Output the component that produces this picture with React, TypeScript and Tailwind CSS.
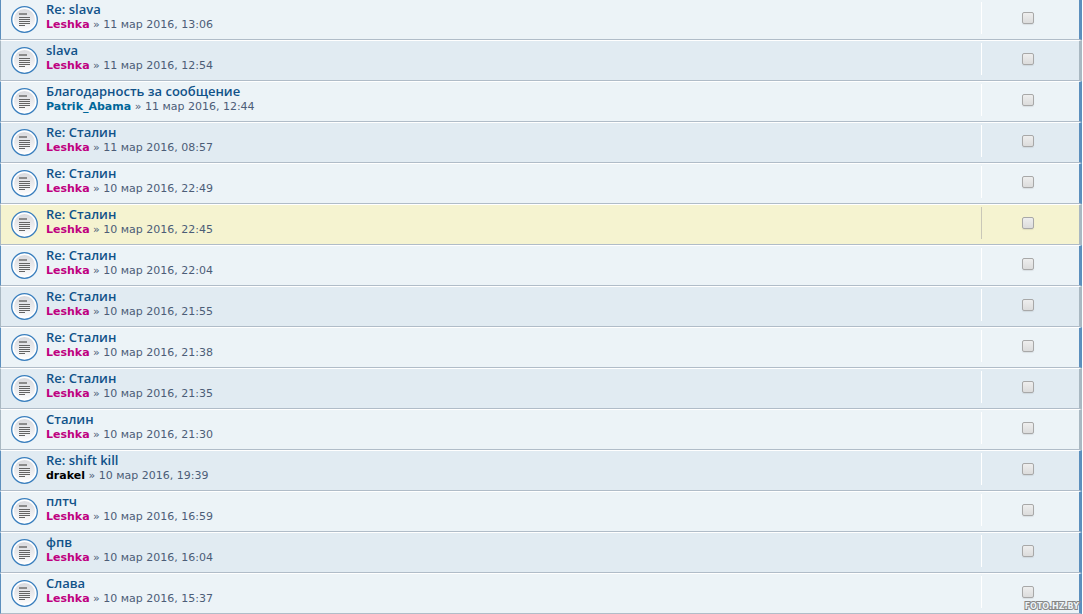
import clsx from "clsx";

type Message = {
  subject: string;
  author: string;
  date: string;
  color?: string;
  replied?: boolean;
  marked?: boolean;
};

const messages: Message[] = [
  { subject: "Re: slava", author: "Leshka", date: "11 мар 2016, 13:06", replied: true },
  { subject: "slava", author: "Leshka", date: "11 мар 2016, 12:54" },
  { subject: "Благодарность за сообщение", author: "Patrik_Abama", date: "11 мар 2016, 12:44", color: "text-[#006699]", replied: true },
  { subject: "Re: Сталин", author: "Leshka", date: "11 мар 2016, 08:57", replied: true },
  { subject: "Re: Сталин", author: "Leshka", date: "10 мар 2016, 22:49", replied: true },
  { subject: "Re: Сталин", author: "Leshka", date: "10 мар 2016, 22:45", marked: true },
  { subject: "Re: Сталин", author: "Leshka", date: "10 мар 2016, 22:04", replied: true },
  { subject: "Re: Сталин", author: "Leshka", date: "10 мар 2016, 21:55" },
  { subject: "Re: Сталин", author: "Leshka", date: "10 мар 2016, 21:38", replied: true },
  { subject: "Re: Сталин", author: "Leshka", date: "10 мар 2016, 21:35" },
  { subject: "Сталин", author: "Leshka", date: "10 мар 2016, 21:30" },
  { subject: "Re: shift kill", author: "drakel", date: "10 мар 2016, 19:39", color: "text-black", replied: true },
  { subject: "плтч", author: "Leshka", date: "10 мар 2016, 16:59", replied: true },
  { subject: "фпв", author: "Leshka", date: "10 мар 2016, 16:04", replied: true },
  { subject: "Слава", author: "Leshka", date: "10 мар 2016, 15:37", replied: true },
];

const TopicIcon = () => (
  <svg className="w-[27px] h-[27px] shrink-0" viewBox="0 0 27 27" aria-hidden="true">
    <defs>
      <linearGradient id="disc" x1="0" y1="0" x2="0" y2="1">
        <stop offset="0" stopColor="#d9dade" />
        <stop offset="1" stopColor="#fbfbfc" />
      </linearGradient>
    </defs>
    <circle cx="13.5" cy="13.5" r="12.8" fill="#fff" stroke="#3a7fbe" strokeWidth="1.3" />
    <circle cx="13.5" cy="13.5" r="10.5" fill="url(#disc)" />
    <path d="M8 7h8v2H8z" fill="#8b8b8b" />
    <path d="M8 11.5h11M8 13.5h11M8 15.5h11M8 17.5h11M8 19.5h6" stroke="#646464" />
  </svg>
);

const MessageRow = ({ message, index }: { message: Message; index: number }) => {
  const { subject, author, date, color = "text-[#bf0080]", replied, marked } = message;
  const subjectId = `subject-${index}`;

  return (
    <li
      className={clsx(
        "flex items-start border-l border-r-3 border-b border-b-[#b0bcc8]",
        index > 0 && "border-t border-t-white",
        replied ? "border-x-[#5c8fbd]" : "border-x-[#a9b8c2]",
        marked ? "bg-[#f5f3d0]" : index % 2 ? "bg-[#e1ebf2]" : "bg-[#ecf3f7]"
      )}
    >
      <div className="flex flex-1 items-start pl-[10px] pt-px pb-1">
        <div className="pt-[5px]">
          <TopicIcon />
        </div>
        <div className="pl-2">
          <a
            href="#"
            id={subjectId}
            className="block font-['Open_Sans',sans-serif] text-[13px] leading-4 font-semibold text-[#105289]"
          >
            {subject}
          </a>
          <p className="font-['DejaVu_Sans',sans-serif] text-[11px] leading-4 text-[#4c5d77]">
            <a href="#" className={clsx("font-bold", color)}>
              {author}
            </a>{" "}
            » {date}
          </p>
        </div>
      </div>
      <div
        className={clsx(
          "flex w-[98px] h-8 mt-[2px] mb-[5px] justify-center border-l pt-[10px] pr-[5px]",
          marked ? "border-[#c9c7b8]" : "border-white"
        )}
      >
        <input
          type="checkbox"
          aria-labelledby={subjectId}
          className="appearance-none size-3 rounded-[2px] border border-[#a8a8a8] bg-linear-to-b from-[#eeeeee] to-[#dcdcdc] shadow-[0_1px_1px_#00000014] checked:bg-[#3a7fbe]"
        />
      </div>
    </li>
  );
};

const App = () => {
  return (
    <main className="relative bg-white pr-px">
      <ul>
        {messages.map((message, index) => (
          <MessageRow key={index} message={message} index={index} />
        ))}
      </ul>
      <span className="absolute right-1 bottom-[2px] font-['DejaVu_Sans',sans-serif] text-[8px] leading-[10px] font-bold text-[#ecf3f7] [-webkit-text-stroke:2px_#858585] [paint-order:stroke]">
        FOTO.HZ.BY
      </span>
    </main>
  );
};

export default App;
